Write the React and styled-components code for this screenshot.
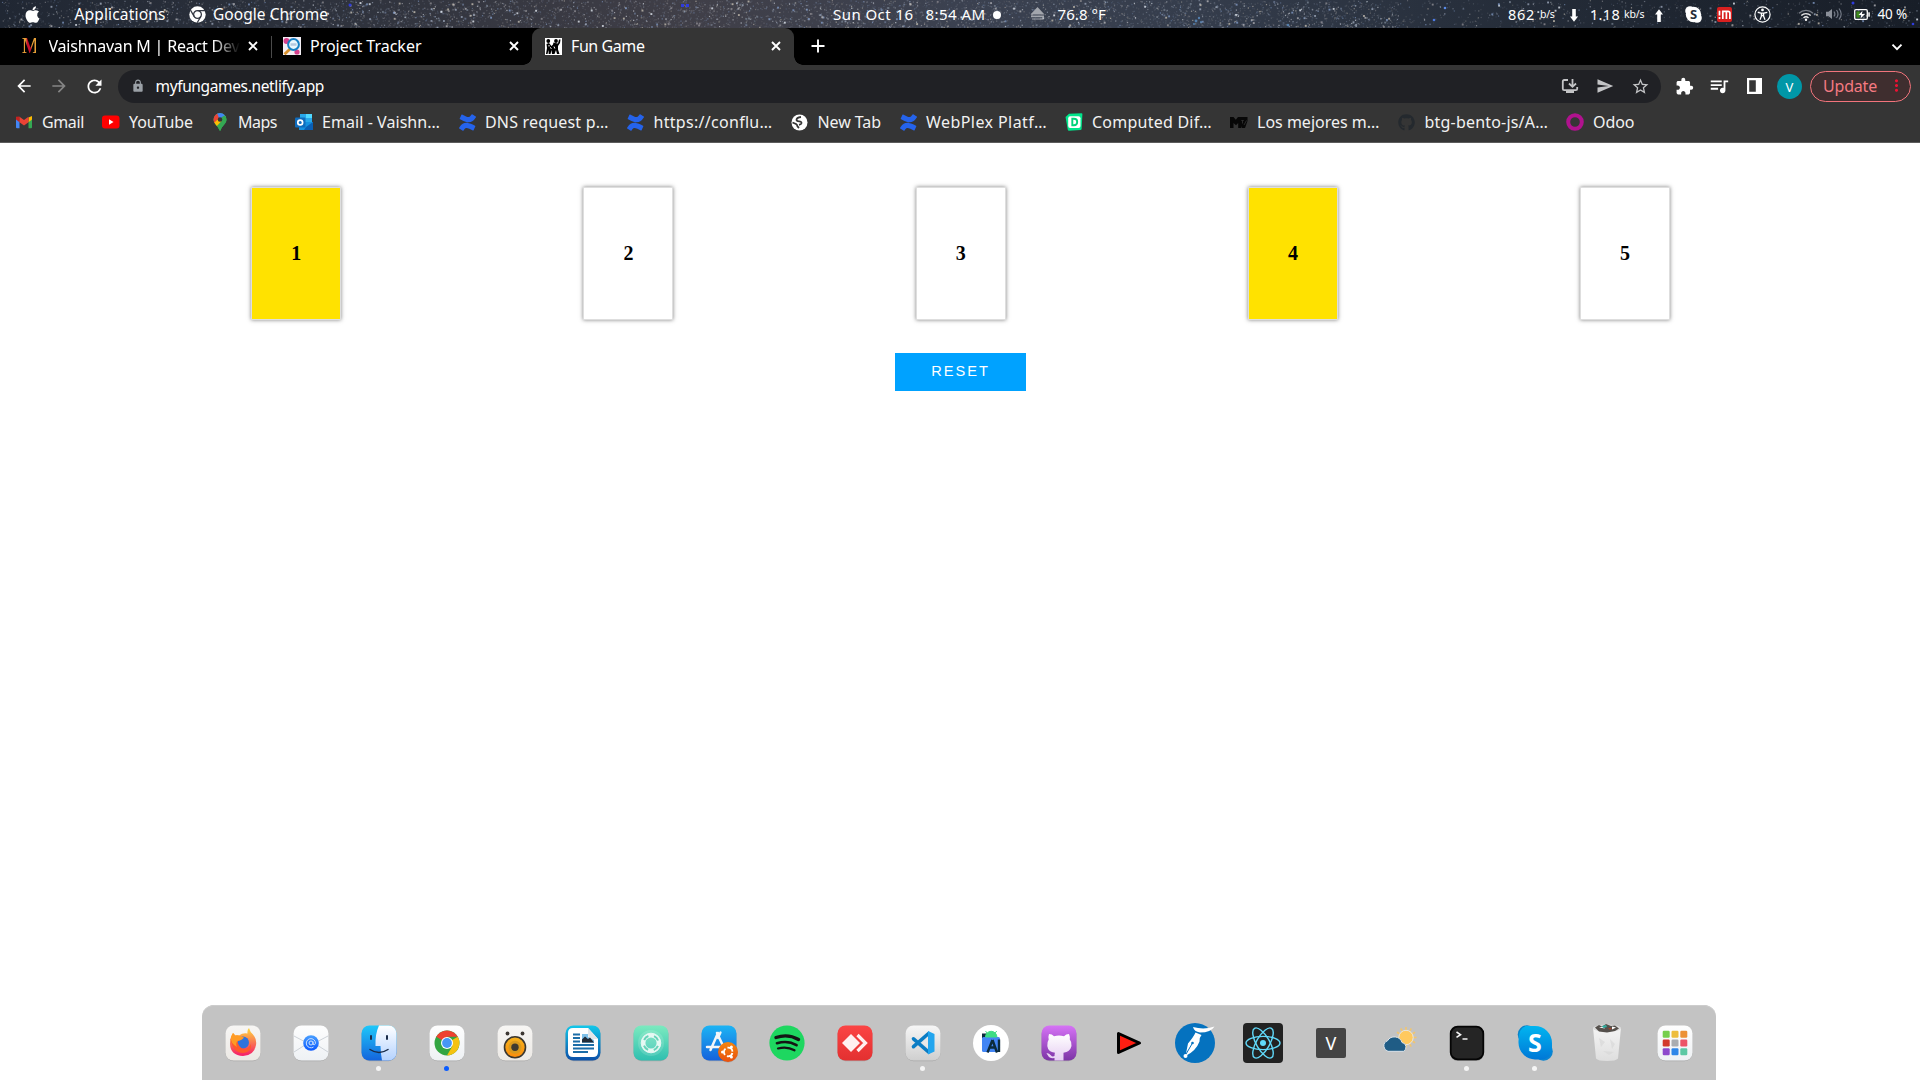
import React, { useLayoutEffect, useRef, useState } from "react";
import styled, { createGlobalStyle, css } from "styled-components";
import { FaApple, FaGithub } from "react-icons/fa";
import { SiConfluence } from "react-icons/si";
import {
  MdArrowBack, MdArrowForward, MdRefresh, MdLock, MdSend, MdStarOutline, MdExtension,
  MdQueueMusic, MdMoreVert,
} from "react-icons/md";

const Global = createGlobalStyle`
  * { box-sizing: border-box; }
  html, body { margin: 0; padding: 0; background: #fff; overflow: hidden; }
`;

const ui = `"Noto Sans", "Open Sans", sans-serif`;

const Screen = styled.div`
  width: 1920px;
  height: 1080px;
  display: flex;
  flex-direction: column;
  font-family: ${ui};
  color: #fff;
  overflow: hidden;
`;

/* ---------- shared parts ---------- */

const Slot = styled.span`
  display: flex;
  align-items: center;
  justify-content: center;
  flex: none;
  width: ${(p) => p.$w}px;
  height: ${(p) => p.$h || p.$w}px;
  margin-left: ${(p) => p.$gap || 0}px;
  margin-top: ${(p) => p.$drop || 0}px;
  color: ${(p) => p.$color || "inherit"};
  svg { display: block; flex: none; overflow: visible; }
`;

const LabelBox = styled.span`
  flex: none;
  display: block;
  width: ${(p) => p.$w}px;
  margin-left: ${(p) => p.$gap || 0}px;
  margin-bottom: ${(p) => p.$lift || 0}px;
  font-size: ${(p) => p.$size || 16}px;
  line-height: 20px;
  white-space: nowrap;
  color: ${(p) => p.$color || "inherit"};
  ${(p) => p.$fade && css`
    mask-image: linear-gradient(90deg, #000 86%, transparent 100%);
  `}
`;

function Label({ w, gap, size, color, fade, lift, children }) {
  const ref = useRef(null);
  const [spacing, setSpacing] = useState(0);
  useLayoutEffect(() => {
    const natural = ref.current.getBoundingClientRect().width;
    setSpacing((w - natural) / children.length);
  }, []);
  return (
    <LabelBox $w={w} $gap={gap} $size={size} $color={color} $fade={fade} $lift={lift}>
      <span ref={ref} style={{ letterSpacing: spacing }}>{children}</span>
    </LabelBox>
  );
}

/* ---------- desktop menu bar ---------- */

const MenuBar = styled.header`
  position: relative;
  height: 28px;
  display: flex;
  align-items: center;
  flex: none;
  overflow: hidden;
  background: linear-gradient(90deg, #202733 0, #2b303b 14%, #3a3a43 30%, #403f48 36%, #3b4150 50%, #353d4c 62%, #28303d 75%, #1e2530 88%, #181e28 100%);
`;

const Sky = styled.svg`
  position: absolute;
  inset: 0;
`;

const MenuItems = styled.div`
  position: relative;
  display: flex;
  align-items: center;
  height: 28px;
`;

const stars = (() => {
  let seed = 20221;
  const rnd = () => ((seed = (seed * 16807) % 2147483647) / 2147483647);
  const tints = ["#9aa5b8", "#b0b0b5", "#c4bdb0", "#7f98c2", "#e2e8f0", "#727d8c", "#67748e", "#8c8a90"];
  const list = [];
  for (let i = 0; i < 7600; i++) {
    const x = rnd() * 1920;
    const y = rnd() * 28;
    const s = rnd();
    const tint = tints[Math.floor(rnd() * tints.length)];
    const density = x > 1400 ? 0.3 : x < 330 ? 0.6 : 1;
    if (rnd() > density) continue;
    list.push([x, y, s > 0.95 ? 1.9 : 1.2, tint, 0.14 + s * s * s * 0.7]);
  }
  return list;
})();

const StarField = () => (
  <Sky width="1920" height="28">
    {stars.map(([x, y, r, c, o], i) => (
      <rect key={i} x={x} y={y} width={r} height={r} fill={c} opacity={o} />
    ))}
    <g fill="#2f3bdc">
      <rect x="681" y="4" width="3" height="3" /><rect x="686" y="4" width="3" height="3" />
      <circle cx="350" cy="5" r="1.5" /><circle cx="1445" cy="8" r="1.3" fill="#5a8be8" />
      <circle cx="1434" cy="20" r="1.3" fill="#4d79e0" /><circle cx="1853" cy="3" r="1.5" />
      <circle cx="1913" cy="24" r="1.3" />
    </g>
    <g fill="#5b8fc4" opacity=".8">
      <circle cx="1196" cy="21" r="1.4" /><circle cx="1199" cy="18" r="1.2" /><circle cx="1201" cy="22" r="1" />
      <circle cx="1194" cy="24" r="1" /><circle cx="1288" cy="25" r="1.3" />
    </g>
  </Sky>
);

const EjectIcon = () => (
  <svg width="15" height="14" viewBox="0 0 15 14" fill="#a3a6ad">
    <path d="M7.5 0 14.5 7.5H.5zM1 8.6h13v1.6H1zM2 11.4h11.500v1.200H2z" />
  </svg>
);
const ThickArrow = ({ up }) => (
  <svg width="8" height="13" viewBox="0 0 8 13" fill="#fff">
    <path transform={up ? "rotate(180 4 6.500)" : undefined} d="M2.200 0h3.600v7.500H8L4 12.800 0 7.500h2.200z" />
  </svg>
);
const ChromeMono = () => (
  <svg width="17" height="17" viewBox="-8.500 -8.500 17 17" fill="none">
    <circle r="8.200" fill="#fff" />
    <circle r="3.900" stroke="#343843" strokeWidth="1.300" />
    <path d="M0-3.900H7.500M-3.400 1.900-7-4.400M3.400 1.900-.3 8.200" stroke="#343843" strokeWidth="1.200" />
  </svg>
);
const SkypeText = styled.text`
  font: bold 13px "Noto Sans", sans-serif;
  fill: #262d39;
  text-anchor: middle;
`;
const SkypeMono = () => (
  <svg width="17" height="17" viewBox="0 0 17 17">
    <circle cx="5" cy="5" r="4.800" fill="#fff" /><circle cx="12" cy="12" r="4.800" fill="#fff" />
    <circle cx="8.500" cy="8.500" r="7.700" fill="#fff" />
    <SkypeText x="8.500" y="13">S</SkypeText>
  </svg>
);
const BadgeM = () => (
  <svg width="15" height="15" viewBox="0 0 15 15">
    <rect width="15" height="15" rx="2" fill="#d8201f" />
    <path d="M2.500 3.800v4.700M2.500 10v2M5.800 12V4M5 4.300h6q1.900 0 1.900 1.800V12M9.400 4.500V12" fill="none" stroke="#fff" strokeWidth="1.700" />
  </svg>
);
const AccessIcon = () => (
  <svg width="17" height="17" viewBox="0 0 17 17" fill="none" stroke="#fff">
    <circle cx="8.500" cy="8.500" r="7.600" strokeWidth="1.200" />
    <circle cx="8.500" cy="3.900" r="1.400" fill="#fff" stroke="none" />
    <path d="M3.700 6.300 7 7.100h3l3.300-.8M7.400 7v3.200L6 13.700M9.600 7v3.200l1.400 3.500M7.600 9.500h1.800" strokeWidth="1.300" />
  </svg>
);
const WifiIcon = () => (
  <svg width="16" height="12" viewBox="0 0 16 12" fill="none" strokeWidth="1.400">
    <path d="M1 4.200a10 10 0 0 1 14 0" stroke="#777c85" />
    <path d="M3.300 6.600a6.600 6.600 0 0 1 9.400 0M5.500 8.900a3.600 3.600 0 0 1 5 0" stroke="#e8e8e8" />
    <circle cx="8" cy="10.800" r="1.200" fill="#fff" />
  </svg>
);
const SoundIcon = () => (
  <svg width="17" height="14" viewBox="0 0 17 14" fill="none" stroke="#737985" strokeWidth="1.200">
    <path d="M0 4.800h2.500L6 2v10L2.500 9.200H0z" fill="#8a8f98" stroke="none" />
    <path d="M8 4.500q1.800 2.500 0 5M10.500 3q3 4 0 8M13 1.500q4.400 5.500 0 11" />
  </svg>
);
const BatteryIcon = () => (
  <svg width="16" height="11" viewBox="0 0 16 11">
    <rect x=".7" y=".7" width="12.600" height="9.600" rx="1.200" fill="none" stroke="#fff" strokeWidth="1.300" />
    <rect x="2.300" y="2.300" width="3.500" height="6.400" fill="#3f8a1d" />
    <rect x="14.300" y="3.300" width="1.500" height="4.400" fill="#fff" />
    <path d="M8.500 1.800 4.500 6h2.700L6.500 9.400 11 5H8z" fill="#fff" />
  </svg>
);

const StatusDot = styled.span`
  width: 8px;
  height: 8px;
  margin-left: 7.5px;
  margin-top: 1px;
  border-radius: 50%;
  background: #fff;
`;

const MenuBarView = () => (
  <MenuBar>
    <StarField />
    <MenuItems>
      <Slot $w={18} $gap={23}><FaApple size={19} /></Slot>
      <Label gap={33.500} w={91} size={15.500}>Applications</Label>
      <Slot $w={17} $gap={23}><ChromeMono /></Slot>
      <Label gap={7.500} w={115} size={15.500}>Google Chrome</Label>
      <Label gap={505} w={80.500} size={15}>Sun Oct 16</Label>
      <Label gap={12} w={60} size={15}>8:54 AM</Label>
      <StatusDot />
      <Slot $w={15} $gap={29} $h={15}><EjectIcon /></Slot>
      <Label gap={12.500} w={48.500} size={15}>76.8 °F</Label>
      <Label gap={402} w={27} size={14.500}>862</Label>
      <Label gap={5} w={14.500} size={10.500}>b/s</Label>
      <Slot $w={8} $h={13} $gap={15.500} $drop={2}><ThickArrow /></Slot>
      <Label gap={12} w={30} size={14.500}>1.18</Label>
      <Label gap={4} w={20.500} size={10.500}>kb/s</Label>
      <Slot $w={8} $h={13} $gap={10.500} $drop={2}><ThickArrow up /></Slot>
      <Slot $w={17} $gap={21.500}><SkypeMono /></Slot>
      <Slot $w={15} $gap={15.500}><BadgeM /></Slot>
      <Slot $w={17} $gap={21.500}><AccessIcon /></Slot>
      <Slot $w={16} $gap={27.500} $drop={2}><WifiIcon /></Slot>
      <Slot $w={17} $gap={11.500}><SoundIcon /></Slot>
      <Slot $w={16} $gap={11.500}><BatteryIcon /></Slot>
      <Label gap={7.500} w={29.500} size={13.500}>40 %</Label>
    </MenuItems>
  </MenuBar>
);

/* ---------- browser tabs ---------- */

const TabStrip = styled.div`
  height: 37px;
  flex: none;
  display: flex;
  align-items: stretch;
  background: #000;
`;

const Tab = styled.div`
  position: relative;
  width: ${(p) => p.$w}px;
  display: flex;
  align-items: center;
  padding: 0 11px 1px ${(p) => p.$pad}px;
  flex: none;
  ${(p) => p.$active && css`
    background: #353535;
    border-radius: 9px 9px 0 0;
    &::before, &::after {
      content: "";
      position: absolute;
      bottom: 0;
      width: 9px;
      height: 9px;
    }
    &::before { left: -9px; background: radial-gradient(circle at 0 0, transparent 8.500px, #353535 9px); }
    &::after { right: -9px; background: radial-gradient(circle at 100% 0, transparent 8.500px, #353535 9px); }
  `}
`;

const Separator = styled.span`
  width: 1px;
  height: 22px;
  align-self: center;
  background: #4a4a4a;
`;

const TabClose = styled(Slot)`
  margin-left: auto;
`;

const StrokeIcon = ({ size, d }) => (
  <svg width={size} height={size} viewBox={`0 0 ${size} ${size}`} fill="none" stroke="#fff" strokeWidth="1.900">
    <path d={d} />
  </svg>
);
const CrossIcon = () => <StrokeIcon size={14} d="m3 3 8 8M11 3l-8 8" />;
const PlusIcon = () => <StrokeIcon size={20} d="M10 3.500v13M3.500 10h13" />;
const ChevronIcon = () => <StrokeIcon size={14} d="m2.500 4.700 4.500 4.500 4.500-4.500" />;

const LetterM = styled.span`
  width: 18px;
  font: bold 23px/20px "Liberation Serif", serif;
  letter-spacing: -1px;
  transform: scaleX(0.8);
  transform-origin: 0 50%;
  background: linear-gradient(90deg, #e6a037 28%, #c8102e 34%, #c8102e 62%, #e6a037 68%);
  background-clip: text;
  color: transparent;
`;

const TrackerIcon = () => (
  <svg width="18" height="18" viewBox="0 0 18 18">
    <rect width="18" height="18" fill="#f3eef4" />
    <circle cx="3.500" cy="4" r="3" fill="#d6408b" /><circle cx="14" cy="15" r="2.600" fill="#d6408b" />
    <path d="M7 12 1.500 17.300" stroke="#d8912c" strokeWidth="2.800" />
    <circle cx="10.500" cy="7.500" r="5.400" fill="#eaf7fd" stroke="#167fc4" strokeWidth="2" />
    <path d="M7.500 7.500h6" stroke="#b7c9de" strokeWidth="2.500" />
  </svg>
);
const FunIcon = () => (
  <svg width="17" height="17" viewBox="0 0 17 17">
    <rect width="17" height="17" fill="#fff" />
    <circle cx="3.300" cy="3" r="1.900" /><circle cx="11" cy="3" r="1.900" />
    <path d="M1.500 6 4 5l2.500 3L8 6.500l.5-2L10 5l3 .5L14 1.500h1.500L15 5l-2 3v3.500l1.500 4.500h-2.500L11 12l-1.500 4H7L6.500 12 5.500 16H3.700L3.500 12l-1 4H1l1-6z" />
    <path d="m5 9.500 1.500 1M9 8.500l.8 2M4 7v1.500" stroke="#fff" />
  </svg>
);

const Tabs = () => (
  <TabStrip>
    <Tab $w={271} $pad={22}>
      <LetterM>M</LetterM>
      <Label gap={8.500} w={191} fade>Vaishnavan M | React Dev</Label>
      <TabClose $w={14}><CrossIcon /></TabClose>
    </Tab>
    <Separator />
    <Tab $w={260} $pad={11}>
      <TrackerIcon />
      <Label gap={9} w={111.500}>Project Tracker</Label>
      <TabClose $w={14}><CrossIcon /></TabClose>
    </Tab>
    <Tab $w={262} $pad={13} $active>
      <FunIcon />
      <Label gap={9} w={73.500}>Fun Game</Label>
      <TabClose $w={14}><CrossIcon /></TabClose>
    </Tab>
    <Tab $w={50} $pad={14}><PlusIcon /></Tab>
    <TabClose $w={46} $h={37}><ChevronIcon /></TabClose>
  </TabStrip>
);

/* ---------- address bar ---------- */

const Toolbar = styled.div`
  height: 43px;
  flex: none;
  display: flex;
  align-items: center;
  padding-bottom: 1px;
  background: #353535;
`;

const Omnibox = styled.div`
  width: 1543px;
  height: 33px;
  margin-left: 14px;
  margin-top: 1px;
  border-radius: 17px;
  background: #202125;
  display: flex;
  align-items: center;
  padding: 0 12px 1px 12px;
`;

const OmniActions = styled.div`
  margin-left: auto;
  display: flex;
  gap: 17px;
  color: #c3c4c6;
`;

const Avatar = styled.span`
  width: 25px;
  height: 25px;
  margin-left: 15px;
  margin-top: 1px;
  border-radius: 50%;
  background: #0097a7;
  display: flex;
  align-items: center;
  justify-content: center;
  font-size: 13px;
`;

const UpdateButton = styled.div`
  width: 101px;
  height: 31px;
  margin-left: 8px;
  border: 1px solid #f2747c;
  border-radius: 16px;
  background: #3f2e2f;
  display: flex;
  align-items: center;
  padding: 0 0 1px 12px;
`;

const InstallIcon = () => (
  <svg width="18" height="17" viewBox="0 0 18 17" fill="none" stroke="currentColor" strokeWidth="1.800">
    <path d="M7 2H3.200Q1.800 2 1.800 3.400v7.400q0 1.400 1.400 1.400h11.600q1.400 0 1.400-1.400V9" />
    <path d="M5 12.500h8V15H5z" fill="currentColor" stroke="none" />
    <path d="M11.500 1v7.500M8 5.500l3.500 3.300L15 5.500" />
  </svg>
);
const PanelIcon = () => (
  <svg width="15" height="16" viewBox="0 0 15 16">
    <path fill="#fff" fillRule="evenodd" d="M0 0h15v16H0zM2.200 2.200v11.600h6.600V2.200z" />
  </svg>
);

const AddressRow = () => (
  <Toolbar>
    <Slot $w={20} $gap={14}><MdArrowBack size={20} /></Slot>
    <Slot $w={20} $gap={15} $color="#858585"><MdArrowForward size={20} /></Slot>
    <Slot $w={20} $gap={15}><MdRefresh size={21} /></Slot>
    <Omnibox>
      <Slot $w={14} $gap={1} $color="#9aa0a6"><MdLock size={14} /></Slot>
      <Label gap={10.500} w={168.500} size={15.500} lift={1}>myfungames.netlify.app</Label>
      <OmniActions>
        <Slot $w={18}><InstallIcon /></Slot>
        <Slot $w={18}><MdSend size={18} /></Slot>
        <Slot $w={18}><MdStarOutline size={19} /></Slot>
      </OmniActions>
    </Omnibox>
    <Slot $w={18} $gap={14}><MdExtension size={19} /></Slot>
    <Slot $w={20} $gap={16}><MdQueueMusic size={22} /></Slot>
    <Slot $w={16} $gap={17}><PanelIcon /></Slot>
    <Avatar>V</Avatar>
    <UpdateButton>
      <Label w={54} color="#f47a82">Update</Label>
      <Slot $w={18} $gap={10} $color="#ee1133"><MdMoreVert size={19} /></Slot>
    </UpdateButton>
  </Toolbar>
);

/* ---------- bookmarks ---------- */

const BookmarkBar = styled.nav`
  height: 35px;
  flex: none;
  display: flex;
  gap: 18px;
  padding: 0 0 6px 15px;
  align-items: center;
  background: #353535;
  border-bottom: 1px solid #5c5c5c;
  color: #f1f1f1;
`;

const Bookmark = styled.div`
  display: flex;
  align-items: center;
  flex: none;
`;

const GmailIcon = () => (
  <svg width="18" height="14" viewBox="0 0 18 14">
    <path d="M1 3v9.200q0 1 1 1h2.500V6z" fill="#4285f4" />
    <path d="M17 3v9.200q0 1-1 1h-2.500V6z" fill="#34a853" />
    <path d="M13.500 2.500 17 1v3.500l-3.500 2.700z" fill="#fbbc04" />
    <path d="M1 1.800 4.500 1.500v5.700L1 4.500z" fill="#c5221f" />
    <path d="M4.500 7.200V1.700L9 5l4.500-3.300v5.500L9 10.500z" fill="#ea4335" />
  </svg>
);
const MapsIcon = () => (
  <svg width="14" height="18" viewBox="0 0 14 18">
    <defs><clipPath id="pin"><path d="M7 0a6.500 6.500 0 0 1 6.500 6.500C13.500 11 8.500 13 7.600 17.500H6.400C5.500 13 .5 11 .5 6.500A6.500 6.500 0 0 1 7 0z" /></clipPath></defs>
    <g clipPath="url(#pin)">
      <rect width="14" height="18" fill="#34a853" />
      <path d="M3 0h11v3L7 10 4 5z" fill="#4285f4" />
      <path d="M0 12 9 4l5-3v17H7z" fill="#34a853" />
      <path d="m0 10 5.500-5 3 3L3 14z" fill="#fbbc04" />
      <path d="M0 0h4l2 5-5 5H0z" fill="#ea4335" />
    </g>
    <circle cx="7" cy="6.500" r="2.300" fill="#353535" />
  </svg>
);
const OutlookIcon = () => (
  <svg width="18" height="18" viewBox="0 0 18 18">
    <path d="M5 1h12v9H5z" fill="#28a8ea" /><path d="M11 1h6v4h-6z" fill="#50d9ff" />
    <path d="M4 9h14v8H4z" fill="#1490df" /><path d="M11 14l7-5v8H9z" fill="#0a5fb5" />
    <rect y="4.500" width="10.500" height="10" rx="1" fill="#0f6cbd" />
    <circle cx="5.200" cy="9.500" r="2.400" fill="none" stroke="#fff" strokeWidth="1.700" />
  </svg>
);
const GlobeIcon = () => (
  <svg width="17" height="17" viewBox="0 0 17 17">
    <circle cx="8.500" cy="8.500" r="8" fill="#fff" />
    <path d="M10 3Q5.500 3.500 5.500 6q.3 1.400 2.600 1.400 2.600 0 2.400 1.800-.2 1.300-2.500 1.600M1.500 8.500l3.500 1.500q1.500 1 1.500 2.500l1.500 1.500" fill="none" stroke="#353535" strokeWidth="1.800" />
  </svg>
);
const DiffIcon = () => (
  <svg width="18" height="18" viewBox="0 0 18 18">
    <path d="M4 .8 16.500.3q1 0 .9 1L16.600 16q-.1 1-1.200 1L4 17.700q-1 0-1.200-1L.6 4.500q-.2-1 .8-1.200z" fill="#00e58b" />
    <rect x="3.200" y="3.200" width="12.300" height="11.800" rx="2" fill="#fff" />
    <path d="M7.300 5.800H9q3.200 0 3.200 3.200T9 12.200H7.300z" fill="none" stroke="#00d27a" strokeWidth="1.900" />
  </svg>
);
const MtvIcon = () => (
  <svg width="18" height="13" viewBox="0 0 18 13">
    <path d="M0 1h3.500L5.800 3.800 8 1h9.500v4L15 12h-3l-.7-2V12H8.200V7L6 9.300 3.500 7v5H0z" fill="#070707" />
    <path d="M11.300 4.500h2.500M12.500 4.500v3M14 9l2.500-4.500" stroke="#353535" strokeWidth=".8" fill="none" />
  </svg>
);
const OdooIcon = () => (
  <svg width="18" height="18"><circle cx="9" cy="9" r="6.800" fill="none" stroke="#b0128e" strokeWidth="4" /></svg>
);
const ConfluenceIcon = () => <SiConfluence size={17} color="#2563eb" />;
const TubeIcon = () => (
  <svg width="18" height="14" viewBox="0 0 18 14"><rect y=".5" width="17.500" height="13" rx="3" fill="#f00" /><path d="M7 4.300 11.500 7 7 9.700z" fill="#fff" /></svg>
);

const bookmarks = [
  [GmailIcon, "Gmail", 42],
  [TubeIcon, "YouTube", 64],
  [MapsIcon, "Maps", 39],
  [OutlookIcon, "Email - Vaishn…", 118],
  [ConfluenceIcon, "DNS request p…", 123.5],
  [ConfluenceIcon, "https://conflu…", 119],
  [GlobeIcon, "New Tab", 63.5],
  [ConfluenceIcon, "WebPlex Platf…", 121],
  [DiffIcon, "Computed Dif…", 120],
  [MtvIcon, "Los mejores m…", 122.5],
  [() => <FaGithub size={17} color="#24292e" />, "btg-bento-js/A…", 123.5],
  [OdooIcon, "Odoo", 41.5],
];

const Bookmarks = () => (
  <BookmarkBar>
    {bookmarks.map(([Icon, text, w]) => (
      <Bookmark key={text}>
        <Slot $w={18}><Icon /></Slot>
        <Label gap={9} w={w}>{text}</Label>
      </Bookmark>
    ))}
  </BookmarkBar>
);

/* ---------- game page ---------- */

const Page = styled.main`
  flex: 1;
  display: flex;
  flex-direction: column;
  align-items: center;
  background: #fff;
  color: #000;
`;

const CardRow = styled.div`
  width: 1661px;
  margin-top: 44px;
  margin-left: 1.4px;
  display: grid;
  grid-template-columns: repeat(5, 1fr);
  justify-items: center;
`;

const Card = styled.div`
  width: 90px;
  height: 133px;
  border: 1px solid #dedede;
  box-shadow: 0 0 4px rgba(0, 0, 0, 0.5);
  background: ${(p) => (p.$picked ? "#ffe200" : "#fff")};
  display: flex;
  align-items: center;
  justify-content: center;
  font: bold 20px "Liberation Serif", serif;
`;

const ResetButton = styled.button`
  width: 131px;
  height: 38px;
  margin-top: 33px;
  padding: 0 0 3px 1px;
  border: 0;
  background: #00a2ff;
  color: #fff;
  font: 14.6px "Liberation Sans", sans-serif;
  letter-spacing: 2px;
`;

/* ---------- dock ---------- */

const Dock = styled.footer`
  width: 1514px;
  height: 75px;
  margin: auto 0 0 -2px;
  border-radius: 12px 12px 0 0;
  background: #c3c3c3;
  box-shadow: inset 0 1px 0 #cdcdcd;
  display: flex;
  align-items: flex-start;
  padding: 18px 0 0 7px;
`;

const DockItem = styled.div`
  width: 68px;
  margin-left: ${(p) => p.$gap || 0}px;
  display: flex;
  flex-direction: column;
  align-items: center;
  gap: 3px;
  svg { display: block; overflow: visible; }
`;

const Running = styled.i`
  width: 5px;
  height: 5px;
  margin-right: 1px;
  border-radius: 50%;
  background: ${(p) => p.$color};
`;

const VTile = styled.span`
  width: 30px;
  height: 30px;
  margin: 5px 0;
  border-radius: 2px;
  background: #444;
  color: #fff;
  font-size: 18px;
  display: flex;
  align-items: center;
  justify-content: center;
`;

const Tile = ({ fill, children }) => (
  <svg width="40" height="40" viewBox="-20 -20 40 40">
    {fill && <rect x="-17.500" y="-16.800" width="35" height="35" rx="8" fill="#000" opacity=".14" />}
    {fill && <rect x="-17.500" y="-17.500" width="35" height="35" rx="8" fill={fill} />}
    {children}
  </svg>
);

const GradientSheet = styled.svg`
  display: block;
  width: 0;
  height: 0;
`;

const Gradients = () => (
  <GradientSheet>
    <defs>
      {[
        ["paper", "#fefefe", "#eef1f4"], ["cream", "#f7f6f4", "#ece9e5"], ["finder", "#1ec8fa", "#1464dc"],
        ["finderR", "#ffffff", "#b4d2ff"], ["mint", "#7ceabf", "#2fbfb0"], ["store", "#1cb4f4", "#1562dc"],
        ["writer", "#12c8ea", "#0b4fa8"], ["red", "#fb4444", "#e33030"], ["silver", "#f6f6f6", "#cfcfcf"],
        ["purple", "#d673f6", "#7c34a6"], ["sky", "#00b5f0", "#0078d7"], ["fox", "#ffd93b", "#f51c6a"],
        ["orb", "#4aa0ff", "#0a58ff"], ["speaker", "#f6b31d", "#fb8c0c"], ["cat", "#ffffff", "#e5cdf2"],
        ["ubuntu", "#f5860f", "#e8500f"], ["bin", "#f4f4f4", "#dedede"],
      ].map(([id, a, b]) => (
        <linearGradient key={id} id={id} x1="0" y1="0" x2="0" y2="1">
          <stop offset="0" stopColor={a} /><stop offset="1" stopColor={b} />
        </linearGradient>
      ))}
    </defs>
  </GradientSheet>
);

const Firefox = () => (
  <Tile fill="url(#cream)">
    <path d="M-10-10q1.500 1 2 2.500 2-.5 4 0 4-3 8.500-2Q4-13 6-15q1 4 4 6.500Q14-4 13 2 11 12.500 0 13-12.500 12.500-13 1-13-6-10-10z" fill="url(#fox)" />
    <circle cx="0" cy="-.5" r="6" fill="#2f73dc" />
    <path d="M-12.500-4q5-3.500 8-2.500 2 .5 4.500.5-2 3.500-5.500 4Q-5 3-1 5.500 5 7.500 8 1q1 8-7.500 9Q-10 10-12.500-4z" fill="#ff5a2b" />
    <path d="M-10-10q1.500 1 2 2.500 3-.7 5 .5Q0-6 1-5.500-1-2.500-5-2.300-8 0-6 4-13 0-12-6z" fill="#ff9b24" />
  </Tile>
);
const Mail = () => (
  <Tile fill="url(#paper)">
    <path d="M-17-7 0 2 17-7M-17 9-6 2M17 9 6 2" stroke="#cdd2d8" fill="none" />
    <circle r="7.800" cx="0" cy="0" fill="url(#orb)" />
    <circle r="2" fill="none" stroke="#c9defd" />
    <path d="M2-1.500V1.200q1.800 1.600 2.500-1A4.600 4.600 0 1 0 2.500 4" fill="none" stroke="#c9defd" />
  </Tile>
);
const Finder = () => (
  <Tile fill="url(#finder)">
    <path d="M0-17.500h9.500a8 8 0 0 1 8 8v19a8 8 0 0 1-8 8H3Q1.800 11 1.500 3H-3.500Q-4-9 0-17.500z" fill="url(#finderR)" />
    <path d="M-8-7v3M8-7v3" stroke="#1a2b48" strokeWidth="2" strokeLinecap="round" />
    <path d="M-9 6.500Q0 12.500 9 6.500" stroke="#1a2b48" strokeWidth="1.500" fill="none" strokeLinecap="round" />
  </Tile>
);
const Chrome = () => (
  <Tile fill="url(#paper)">
    <circle r="12.500" fill="#33a542" />
    <path d="M0 0 10.800-6.200A12.500 12.500 0 0 1 0 12.500L5.400 3z" fill="#f5c211" />
    <path d="M0 0-10.800-6.200A12.500 12.500 0 0 1 10.800-6.200H0z" fill="#ee4130" />
    <circle r="6" fill="#fff" /><circle r="4.900" fill="#4797f5" />
  </Tile>
);
const Speaker = () => (
  <Tile fill="url(#cream)">
    <circle cx="-7.500" cy="-9.500" r="1.900" fill="#3d3833" /><circle cx="7.500" cy="-9.500" r="1.900" fill="#3d3833" />
    <circle cy="4.300" r="10.500" fill="url(#speaker)" stroke="#3b372f" strokeWidth="1.600" />
    <circle cy="4.300" r="6.500" fill="#d99a1e" /><circle cy="4.300" r="3.700" fill="#3f3a30" />
  </Tile>
);
const Writer = () => (
  <Tile fill="url(#writer)">
    <path d="M-9-15H5l10 11V9q0 5-5 5H-10q-5 0-5-5V-10q0-5 5-5z" fill="#fff" />
    <path d="M5-15v6q0 5 5 5h5z" fill="#e2e5e8" />
    <path d="M-10-8.500h7M-10-5h7M-10-1.500h7M-10 2H11M-10 5.500H11M-10 9H5" stroke="#1b6da8" strokeWidth="1.800" />
    <path d="M-1-9h6v3l6 3v3H-1z" fill="#7fc0e8" /><path d="M-1-.5v-3l3-3 3 2.500 2-1.500 4 5z" fill="#222c38" />
  </Tile>
);
const Rescue = () => (
  <Tile fill="url(#mint)">
    <circle r="13" fill="#fff" opacity=".14" />
    <circle r="7.700" fill="none" stroke="#e6f8f3" strokeWidth="4.200" />
    <circle r="7.500" fill="none" stroke="#66d2b8" strokeWidth="2" strokeDasharray="6 5.780" strokeDashoffset="-2.900" />
    <circle r="9.800" fill="none" stroke="#e6f8f3" strokeWidth="1" />
  </Tile>
);
const Store = () => (
  <Tile fill="url(#store)">
    <path d="M-1-10-8.500 7M-2-10 6 7M-12 4H5" stroke="#f2f5f8" strokeWidth="2.500" strokeLinecap="round" fill="none" />
    <path d="M1.500-10.500-1-5" stroke="#f2f5f8" strokeWidth="2.300" strokeLinecap="round" />
    <circle cx="9" cy="9.500" r="10" fill="#000" opacity=".15" />
    <circle cx="9" cy="9" r="10" fill="url(#ubuntu)" />
    <g transform="translate(2.700 2.500)" fill="none" stroke="#fff" strokeWidth="1.800">
      <circle cx="6.500" cy="6.500" r="4.300" strokeDasharray="6.900 2.100" strokeDashoffset="-1" />
      <g fill="#fff" stroke="none"><circle cx=".8" cy="6.500" r="1.500" /><circle cx="9.700" cy="1.400" r="1.500" /><circle cx="9.700" cy="11.600" r="1.500" /></g>
    </g>
  </Tile>
);
const Spotify = () => (
  <Tile>
    <circle r="17.600" fill="#1ed760" />
    <path d="M-11-5.500Q1-9.500 11.500-3.500" stroke="#141414" strokeWidth="3.400" fill="none" strokeLinecap="round" />
    <path d="M-10 .2Q1-3 9.500 2.200" stroke="#141414" strokeWidth="2.700" fill="none" strokeLinecap="round" />
    <path d="M-9 5.500Q0 3 7.500 7.300" stroke="#141414" strokeWidth="2.200" fill="none" strokeLinecap="round" />
  </Tile>
);
const AnyDesk = () => (
  <Tile fill="url(#red)">
    <path d="M-4-9 5 0-4 9-13 0z" fill="#fff0f0" />
    <path d="m2.500-8 8 8-8 8" fill="none" stroke="#fff0f0" strokeWidth="3.200" />
  </Tile>
);
const Code = () => (
  <Tile fill="url(#silver)">
    <path d="M5.500-9.500-9.500 3.700M5.500 9-9.500-4.200" stroke="#0a7cc4" strokeWidth="3.600" strokeLinecap="round" />
    <path d="M5-12 11.500-9v17.500L5 11.500z" fill="#22a5ee" /><path d="M5-5v10L-1 0z" fill="#e8e8e8" />
  </Tile>
);
const Android = () => (
  <Tile>
    <circle r="18" fill="#fff" />
    <path d="M-9-9.500h5v5h-5z" fill="#0b2a3c" /><rect x="-9" y="-6" width="18" height="15" rx="1.500" fill="#4285f4" />
    <path d="M-5.500-6a5.700 5.700 0 0 1 11.400 0zM-4-10l-1.500-2M4.200-10l1.500-2" fill="#3ddc84" stroke="#3ddc84" />
    <path d="M1.500-3-3.500 9.500M1.500-3 6 9.500M-1.500 4.500H4.500M8-3.500V9" stroke="#0b2a3c" strokeWidth="2.400" fill="none" />
  </Tile>
);
const GitHubDesk = () => (
  <Tile fill="url(#purple)">
    <path d="M-10-9q3 0 5 2.200Q0-8 5-6.800 7-9 10-9q1.300 3 .8 5.500Q13-1 12.500 3 11 9 4.500 9.700V17.500h-9V15q-5 .8-6.500-2.500-1-1.500-1.500-2.500 3 .2 4.300 2.200 1.500 2 3.700.8 0-2.300.5-3.300Q-11 9-11.700 3-12-1-10.300-3.500-11-6-10-9z" fill="url(#cat)" />
  </Tile>
);
const PlayIcon = () => (
  <Tile>
    <path d="M-10.500-9.500V9.500L10.500 0z" fill="#ff1e12" stroke="#000" strokeWidth="3" strokeLinejoin="round" />
  </Tile>
);
const PenIcon = () => (
  <Tile>
    <circle r="20" fill="#0572bf" />
    <path d="M.5-10.500Q-1.500-6-7 .5L-9.500 13Q1 8 4.500-1.500 4.500-6 6.500-8z" fill="#fff" />
    <path d="M-2-16Q9-13 19.500-16.500 16-10.500 5-10.500-1-11.500-2-16z" fill="#fff" />
    <path d="M-9.500 12-2.500 0" stroke="#0572bf" strokeWidth="1" /><circle cx="-9.500" cy="13" r="2" fill="#fff" />
    <circle cx="-2.500" cy="0" r="1.300" fill="#0572bf" />
  </Tile>
);
const ReactIcon = () => (
  <Tile>
    <rect x="-20" y="-20" width="40" height="40" rx="4" fill="#222" />
    <circle r="3" fill="#61dafb" />
    {[0, 60, 120].map((a) => <ellipse key={a} rx="17" ry="6.600" transform={`rotate(${a})`} fill="none" stroke="#61dafb" strokeWidth="1.400" />)}
  </Tile>
);
const Weather = () => (
  <Tile>
    {[0, 30, 60, 90, 120, 150, 180, 210, 240, 270, 300, 330].map((a) => <path key={a} d="M7-16v3" transform={`rotate(${a} 7 -5.500)`} stroke="#f3c56b" strokeWidth="1.500" />)}
    <circle cx="7" cy="-5.500" r="7.200" fill="#ffc95e" stroke="#ece7dc" />
    <path d="M-11.500 8.300a5.500 5.500 0 0 1-.5-10.500 8 8 0 0 1 14.500 1.700 4.700 4.700 0 0 1 1.500 8.800z" transform="translate(.500 0)" fill="#1f5c85" stroke="#dbe3ea" strokeWidth="1" />
  </Tile>
);
const Terminal = () => (
  <Tile>
    <rect x="-17" y="-16" width="34" height="34" rx="8" fill="#000" opacity=".25" />
    <rect x="-16.300" y="-16.300" width="32.600" height="32.600" rx="7" fill="#252525" stroke="#050505" strokeWidth="1.800" />
    <path d="m-10.500-11 4 2.700-4 2.700M-4.500-4h5" fill="none" stroke="#f4f4f4" strokeWidth="1.600" />
  </Tile>
);
const SMark = styled.text`
  font: bold 25px "Noto Sans", sans-serif;
  fill: #fff;
  text-anchor: middle;
`;
const Skype = () => (
  <Tile>
    <circle cx="-8" cy="-8.500" r="9.300" fill="#0a84c8" /><circle cx="8.500" cy="8.500" r="9.300" fill="#0a84d0" />
    <path d="M-9-17q4.500 0 9 0A17 17 0 0 1 17 0v6q-1 10-11 10.500H0A17 17 0 0 1-16.500 0Q-17-15-9-17z" fill="url(#sky)" />
    <SMark x="0" y="9">S</SMark>
  </Tile>
);
const Trash = () => (
  <Tile>
    <path d="M-14-15.500Q-12-11.500 0-11.500T14-15.500L11 15.500Q9 18 0 18T-11 15.500z" fill="url(#bin)" />
    <ellipse cy="-14.800" rx="14" ry="3.600" fill="#dcdcdc" />
    <path d="m-12-15.500 4-2.500 3 1.500 4-2.500 5 2 4-.5 4 3-4 2.500-8 1.500-8-1z" fill="#55504c" />
    <path d="m-8-15.500 4-1 2 2zM5-16.500l4 1-4 2z" fill="#fff" /><path d="m-5-17 4-1 1 2-4 1z" fill="#2fafa0" /><path d="m1-15 4 0-2 2z" fill="#a04028" />
    <path d="m-8-5 6 4-4 5zM3-4l5 5-3 5zM-4 8l6 4 5-3" fill="#d5d5d5" opacity=".6" />
  </Tile>
);
const Apps = () => (
  <Tile fill="url(#paper)">
    {["#76cf4c", "#edbd3d", "#ec9136", "#d33a2c", "#a9acb0", "#ec5567", "#8d49cc", "#2f86e8", "#5cc8a4"].map((c, i) => (
      <rect key={c} x={-12.3 + (i % 3) * 8.800} y={-12.3 + Math.floor(i / 3) * 8.800} width="7" height="7" rx="1.200" fill={c} />
    ))}
  </Tile>
);

const dockItems = [
  { Icon: Firefox }, { Icon: Mail }, { Icon: Finder, dot: "#f5f5f5" }, { Icon: Chrome, dot: "#0a5cff" },
  { Icon: Speaker }, { Icon: Writer }, { Icon: Rescue }, { Icon: Store }, { Icon: Spotify }, { Icon: AnyDesk },
  { Icon: Code, dot: "#f5f5f5" }, { Icon: Android }, { Icon: GitHubDesk }, { Icon: PlayIcon, gap: 2 },
  { Icon: PenIcon, gap: -2 }, { Icon: ReactIcon }, { Icon: () => <VTile>V</VTile> }, { Icon: Weather },
  { Icon: Terminal, dot: "#f5f5f5" }, { Icon: Skype, dot: "#f5f5f5" }, { Icon: Trash, gap: 4 }, { Icon: Apps },
];

export default function App() {
  return (
    <Screen>
      <Global />
      <MenuBarView />
      <Tabs />
      <AddressRow />
      <Bookmarks />
      <Page>
        <CardRow>
          {[1, 2, 3, 4, 5].map((n) => <Card key={n} $picked={n === 1 || n === 4}>{n}</Card>)}
        </CardRow>
        <ResetButton>RESET</ResetButton>
        <Gradients />
        <Dock>
          {dockItems.map(({ Icon, dot, gap }, i) => (
            <DockItem key={i} $gap={gap}>
              <Icon />
              {dot && <Running $color={dot} />}
            </DockItem>
          ))}
        </Dock>
      </Page>
    </Screen>
  );
}
